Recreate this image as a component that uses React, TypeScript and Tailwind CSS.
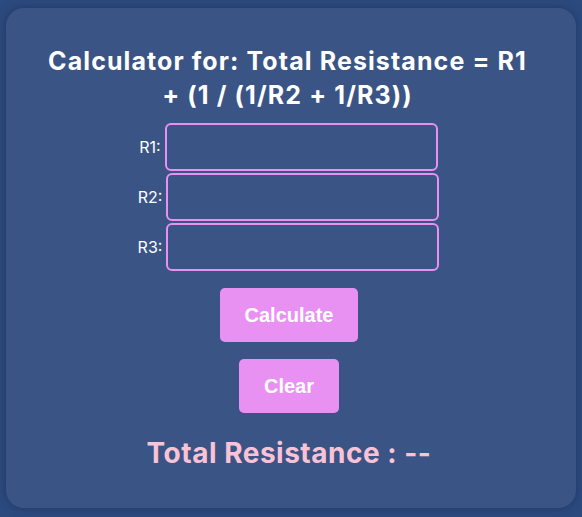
import { useState } from 'react';

const fields = ['R1', 'R2', 'R3'] as const;
type Field = (typeof fields)[number];

export default function App() {
  const [values, setValues] = useState<Record<Field, string>>({ R1: '', R2: '', R3: '' });
  const [total, setTotal] = useState<string>('--');

  const calculate = () => {
    const r1 = parseFloat(values.R1);
    const r2 = parseFloat(values.R2);
    const r3 = parseFloat(values.R3);
    if ([r1, r2, r3].some((n) => isNaN(n)) || r2 === 0 || r3 === 0) {
      setTotal('--');
      return;
    }
    const result = r1 + 1 / (1 / r2 + 1 / r3);
    setTotal(result.toFixed(2));
  };

  const clear = () => {
    setValues({ R1: '', R2: '', R3: '' });
    setTotal('--');
  };

  return (
    <div className="w-[582px] h-[517px] bg-[#2d4a7f] pt-[8px] px-[6px] pb-[9px] font-['Inter',sans-serif]">
      <div className="h-full rounded-[18px] bg-[#3a5485] shadow-[0_0_10px_rgba(20,35,70,0.5)] flex flex-col items-center pt-[36px]">
        <h1 className="w-[496px] mr-[7px] text-center text-[25px] leading-[34px] font-bold text-white tracking-[1.1px]">
          Calculator for: Total Resistance = R1 + (1 / (1/R2 + 1/R3))
        </h1>

        <div className="flex flex-col items-center gap-[2px] mt-[11px] mr-[5px]">
          {fields.map((f) => (
            <label key={f} className="flex items-center gap-[4px] text-[16px] text-white">
              <span>{f}:</span>
              <input
                type="text"
                value={values[f]}
                onChange={(e) => setValues((prev) => ({ ...prev, [f]: e.target.value }))}
                className="w-[273px] h-[48px] rounded-[6px] border-2 border-[#e991f2] bg-transparent px-2 text-white outline-none"
              />
            </label>
          ))}
        </div>

        <button
          onClick={calculate}
          className="mt-[17px] mr-[4px] h-[54px] px-[25px] rounded-[5px] bg-[#e991f3] text-white text-[20px] font-bold font-['Liberation_Sans',Arial,sans-serif]"
        >
          Calculate
        </button>
        <button
          onClick={clear}
          className="mt-[17px] mr-[4px] h-[54px] px-[25px] rounded-[5px] bg-[#e991f3] text-white text-[20px] font-bold font-['Liberation_Sans',Arial,sans-serif]"
        >
          Clear
        </button>

        <p className="mt-[19px] mr-[4px] text-[28px] font-bold text-[#f9c2d5] tracking-[0.5px]">
          Total Resistance : {total}
        </p>
      </div>
    </div>
  );
}
